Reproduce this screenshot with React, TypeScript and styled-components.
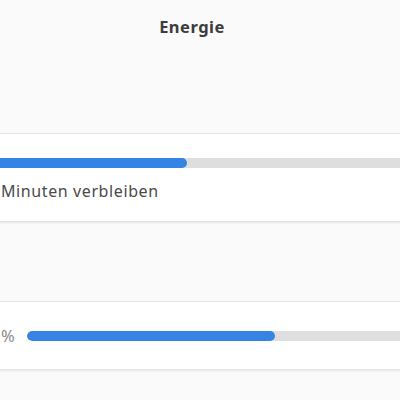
import styled, { createGlobalStyle } from "styled-components";

const GlobalStyle = createGlobalStyle`
  html, body {
    margin: 0;
    padding: 0;
    background: #fafafa;
    font-family: "Noto Sans", "Open Sans", sans-serif;
    overflow: hidden;
  }
`;

const Page = styled.div`
  width: 400px;
  height: 400px;
  overflow: hidden;
  background: #fafafa;
  display: flex;
  flex-direction: column;
`;

const Header = styled.header`
  height: 52px;
  display: flex;
  align-items: center;
  justify-content: center;
  padding-right: 16px;
`;

const Title = styled.h1`
  margin: 0;
  font-size: 16.5px;
  font-weight: 700;
  letter-spacing: 0.5px;
  color: #3d3d3d;
`;

const Content = styled.div`
  display: flex;
  flex-direction: column;
  margin-left: -14px;
  width: 440px;
`;

const Card = styled.section<{ $top: number; $height: number }>`
  margin-top: ${(p) => p.$top}px;
  height: ${(p) => p.$height}px;
  box-sizing: border-box;
  background: #ffffff;
  border: 1px solid #e4e4e4;
  border-radius: 8px;
  box-shadow: 0 1px 2px rgba(0, 0, 0, 0.08);
  display: flex;
  flex-direction: column;
  justify-content: center;
  padding: 0 14px;
`;

const BatteryBody = styled.div`
  display: flex;
  flex-direction: column;
  gap: 13px;
  padding-top: 4px;
`;

const Trough = styled.div<{ $offset?: number }>`
  height: 10px;
  flex: 1 0 auto;
  border-radius: 5px;
  background: #dedede;
  margin-left: ${(p) => p.$offset ?? 0}px;
  overflow: hidden;
  display: flex;
`;

const Fill = styled.div`
  height: 100%;
  border-radius: 5px;
  background: #3584e4;
`;

const Remaining = styled.div`
  font-size: 16px;
  letter-spacing: 0.6px;
  color: #4a4a4a;
  line-height: 20px;
`;

const LevelRow = styled.div`
  display: flex;
  align-items: center;
  gap: 12px;
`;

const Percent = styled.span`
  font-size: 16.5px;
  color: #8a8a8a;
`;

export default function App() {
  return (
    <Page>
      <GlobalStyle />
      <Header>
        <Title>Energie</Title>
      </Header>
      <Content>
        <Card $top={81} $height={89}>
          <BatteryBody>
            <Trough $offset={-6}>
              <Fill style={{ width: "192px" }} />
            </Trough>
            <Remaining>Minuten verbleiben</Remaining>
          </BatteryBody>
        </Card>
        <Card $top={79} $height={69}>
          <LevelRow>
            <Percent>%</Percent>
            <Trough>
              <Fill style={{ width: "248px" }} />
            </Trough>
          </LevelRow>
        </Card>
      </Content>
    </Page>
  );
}
